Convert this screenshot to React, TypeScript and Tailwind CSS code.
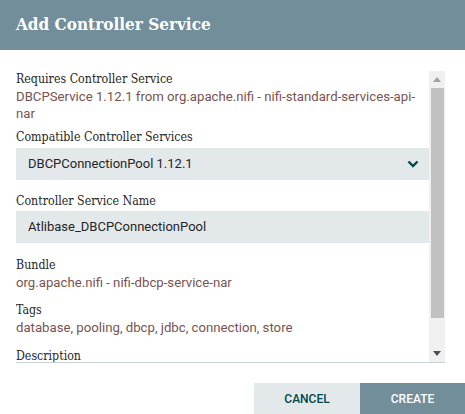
import React from "react";

const labelCls = "text-[12.3px] leading-[17px] text-[#262626]";
const labelFont = { fontFamily: '"DejaVu Serif Condensed", "DejaVu Serif", serif' } as const;
const valueCls = "text-[13.2px] leading-[17px] text-[#775351]";

function Field({ label, children, mb = "mb-3" }: { label: string; children?: React.ReactNode; mb?: string }) {
  return (
    <div className={mb}>
      <div className={labelCls} style={labelFont}>{label}</div>
      {children}
    </div>
  );
}

export default function App() {
  return (
    <div className="w-[465px] h-[414px] bg-white flex flex-col overflow-hidden" style={{ fontFamily: "Roboto, sans-serif" }}>
      <div className="h-[50px] bg-[#728e9b] flex items-center px-4 shrink-0">
        <span className="text-white text-[17px] font-bold" style={{ fontFamily: '"DejaVu Serif Condensed", "DejaVu Serif", serif' }}>Add Controller Service</span>
      </div>
      <div className="flex pl-4 pr-5 pt-[21px] h-[313px] shrink-0">
        <div className="flex-1 overflow-hidden border-b border-[#c7d2d7]">
          <Field label="Requires Controller Service" mb="mb-[7px]">
            <div className={valueCls + " pr-[10px]"}>DBCPService 1.12.1 from org.apache.nifi - nifi-standard-services-api-nar</div>
          </Field>
          <Field label="Compatible Controller Services" mb="mb-[13px]">
            <div className="mt-[2px] h-8 bg-[#e3e8eb] flex items-center justify-between pl-3 pr-[10px] text-[13px] text-[#262626]">
              <span>DBCPConnectionPool 1.12.1</span>
              <svg width="12" height="8" viewBox="0 0 12 8"><path d="M1.5 1.5 L6 6 L10.5 1.5" stroke="#004849" strokeWidth="2.4" fill="none" /></svg>
            </div>
          </Field>
          <Field label="Controller Service Name" mb="mb-[14px]">
            <div className="mt-[1px] h-8 bg-[#e3e8eb] flex items-center pl-3 text-[13px] text-[#262626]">Atlibase_DBCPConnectionPool</div>
          </Field>
          <Field label="Bundle" mb="mb-[11px]">
            <div className={valueCls}>org.apache.nifi - nifi-dbcp-service-nar</div>
          </Field>
          <Field label="Tags" mb="mb-[12px]">
            <div className={valueCls}>database, pooling, dbcp, jdbc, connection, store</div>
          </Field>
          <Field label="Description" mb="mb-0" />
        </div>
        <div className="w-4 bg-[#f0f0f0] flex flex-col items-center border-b border-[#c7d2d7]">
          <div className="h-[17px] flex items-center justify-center">
            <svg width="8" height="5" viewBox="0 0 8 5"><path d="M0 5 L4 0 L8 5 Z" fill="#a3a3a3" /></svg>
          </div>
          <div className="w-[13px] h-[230px] bg-[#c1c1c1]" />
          <div className="flex-1" />
          <div className="h-[17px] flex items-center justify-center">
            <svg width="8" height="5" viewBox="0 0 8 5"><path d="M0 0 L8 0 L4 5 Z" fill="#505050" /></svg>
          </div>
        </div>
      </div>
      <div className="flex-1 flex justify-end items-end">
        <button className="w-[106px] h-[31px] bg-[#e3e8eb] text-[#004849] text-[12px] font-medium">CANCEL</button>
        <button className="w-[105px] h-[31px] bg-[#728e9b] text-white text-[12px] font-medium">CREATE</button>
      </div>
    </div>
  );
}
